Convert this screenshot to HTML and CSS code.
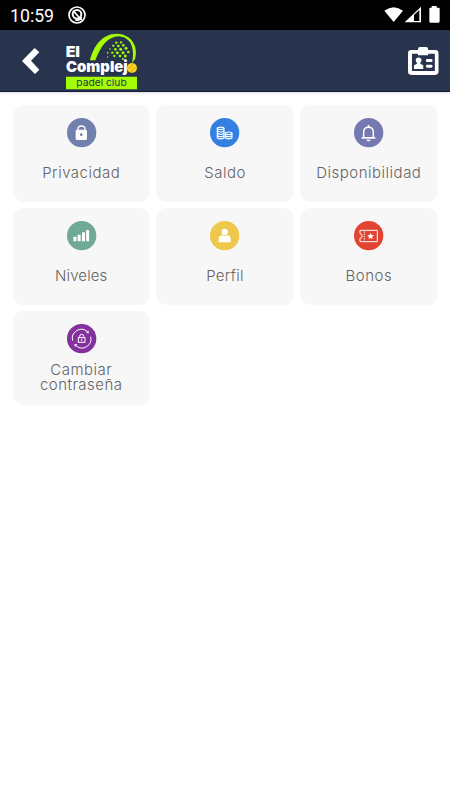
FILE: index.html
```
<!DOCTYPE html>
<html lang="es">
<head>
<meta charset="utf-8">
<title>El Complejo padel club</title>
<link rel="stylesheet" href="styles.css">
</head>
<body>
<div class="status">
  <span class="clock">10:59</span>
  <svg class="notice" viewBox="0 0 54 54" fill="none" stroke="#fff"><circle cx="27" cy="27" r="24" stroke-width="5"/><circle cx="27" cy="25" r="13" stroke-width="6"/><path d="M15 14L41 42" stroke-width="5"/><path d="M22 42Q36 45 41 33" stroke-width="5"/></svg>
  <svg class="signals" viewBox="0 0 168 54"><path d="M1 14Q29-7 57 14L29 48Z" fill="#fff"/><path d="M62 49L111 2V49Z" fill="#fff"/><path d="M90 45V27L106 12V45Z" fill="#000"/><path d="M137 5H143V0H158V5H164Q167 5 167 8V46Q167 50 163 50H139Q136 50 136 46V8Q136 5 139 5Z" fill="#fff"/></svg>
</div>
<header class="bar">
  <svg class="back" viewBox="0 0 54 78"><path d="M38 0L52 13L27 38L52 65L39 78L0 39Z" fill="#fff"/></svg>
  <svg class="logo" viewBox="0 0 216 171">
    <path d="M72 82C83 35 112 2 152 2C194 2 219 39 207 78L198 90C206 57 201 14 159 10C125 11 104 40 88 82Z" fill="#a4fb05"/>
    <g fill="#a4fb05">
      <circle cx="151" cy="29" r="3.500"/><circle cx="165" cy="28" r="3.500"/><circle cx="142" cy="38" r="3.500"/><circle cx="157" cy="39" r="4"/><circle cx="172" cy="37" r="4"/><circle cx="132" cy="48" r="2.500"/><circle cx="148" cy="49" r="4"/><circle cx="164" cy="49" r="4.500"/><circle cx="180" cy="46" r="4.500"/><circle cx="125" cy="59" r="2.500"/><circle cx="139" cy="59" r="3.500"/><circle cx="154" cy="59" r="4.500"/><circle cx="171" cy="59" r="4.500"/><circle cx="187" cy="57" r="4"/><circle cx="125" cy="72" r="2"/><circle cx="145" cy="69" r="3.500"/><circle cx="162" cy="69" r="4"/><circle cx="178" cy="69" r="4.500"/><circle cx="171" cy="78" r="3"/>
    </g>
    <text class="brand" x="-1" y="72" textLength="43" lengthAdjust="spacingAndGlyphs">El</text>
    <text class="brand" x="0" y="116" textLength="185" lengthAdjust="spacingAndGlyphs">Complej</text>
    <circle cx="198" cy="105" r="15" fill="#ffd51c"/>
    <path d="M185 104Q197 108 200 91M196 119Q198 105 212 104" fill="none" stroke="#a8912f" stroke-width="2"/>
    <path d="M0 131H213V169H0Z" fill="#a4fb05"/>
    <text class="club" x="31" y="158" textLength="151" lengthAdjust="spacingAndGlyphs">padel club</text>
  </svg>
  <svg class="badge" viewBox="0 0 92 84"><path d="M10 9H30V7Q30 0 37 0H54Q61 0 61 7V9H82Q92 9 92 19V74Q92 84 82 84H10Q0 84 0 74V19Q0 9 10 9Z" fill="#fff"/><path d="M12 20H30V25H61V20H81V72H12Z" fill="#28334d"/><g fill="#fff"><circle cx="32" cy="40" r="8.500"/><path d="M27 44H37V50L46 55V66H18V55L27 50Z"/><rect x="54" y="36" width="20" height="9" rx="4"/><rect x="54" y="53" width="20" height="9" rx="4"/></g></svg>
</header>
<main class="grid">
  <section class="card">
    <svg class="icon" viewBox="0 0 88 88"><circle cx="44" cy="44" r="44" fill="#7180ad"/><path d="M33 38V33Q33 24 43.500 24Q54 24 54 33V38" fill="none" stroke="#fff" stroke-width="4"/><rect x="26" y="35" width="34" height="31" rx="4" fill="#fff"/><circle cx="43" cy="50" r="4" fill="#7180ad"/></svg>
    <span class="label privacidad">Privacidad</span>
  </section>
  <section class="card">
    <svg class="icon" viewBox="0 0 88 88"><circle cx="44" cy="44" r="44" fill="#347fe2"/><g fill="none" stroke="#fff" stroke-width="3.500"><ellipse cx="32" cy="31" rx="10" ry="3.500"/><path d="M22 31V60Q32 65 42 60V31M22 39Q32 45 42 39M22 46Q32 52 42 46M22 53Q32 59 42 53"/><ellipse cx="56" cy="46" rx="10" ry="4"/><path d="M46 46V61M66 46V61M46 53Q56 60 66 53M46 60Q56 65 66 60"/></g></svg>
    <span class="label saldo">Saldo</span>
  </section>
  <section class="card">
    <svg class="icon" viewBox="0 0 88 88"><circle cx="44" cy="44" r="44" fill="#7579b2"/><path d="M29 59V43Q29 28 43.500 28Q58 28 58 43V59" fill="none" stroke="#fff" stroke-width="4.500"/><path d="M41 21H46V28H41ZM23 57H64V62H23ZM37 65H50Q49 70 43.500 70Q38 70 37 65Z" fill="#fff"/></svg>
    <span class="label disponibilidad">Disponibilidad</span>
  </section>
  <section class="card">
    <svg class="icon" viewBox="0 0 88 88"><circle cx="44" cy="44" r="44" fill="#70a994"/><g fill="#fff"><rect x="19.500" y="47" width="9" height="14" rx="2"/><rect x="32" y="41" width="9" height="20" rx="2"/><rect x="45" y="34" width="9" height="27" rx="2"/><rect x="57.500" y="27" width="9" height="34" rx="2"/></g></svg>
    <span class="label niveles">Niveles</span>
  </section>
  <section class="card">
    <svg class="icon" viewBox="0 0 88 88"><circle cx="44" cy="44" r="44" fill="#edc84a"/><circle cx="44" cy="33" r="9.500" fill="#fff"/><path d="M26 64V55Q26 43 37 43Q44 47 51 43Q62 43 62 55V64Z" fill="#fff"/></svg>
    <span class="label perfil">Perfil</span>
  </section>
  <section class="card">
    <svg class="icon" viewBox="0 0 88 88"><circle cx="44" cy="44" r="44" fill="#e34331"/><path d="M18 28H70V62H18V52Q25 50 25 45Q25 40 18 38Z" fill="none" stroke="#fff" stroke-width="3"/><path d="M31 31V60" stroke="#fff" stroke-width="3" stroke-dasharray="4 3"/><path d="M50 36L53 42L60 43L55 48L56 54L50 51L44 54L45 48L40 43L47 42Z" fill="#fff"/></svg>
    <span class="label bonos">Bonos</span>
  </section>
  <section class="card">
    <svg class="icon" viewBox="0 0 88 88"><circle cx="44" cy="44" r="44" fill="#85309f"/><g fill="none" stroke="#fff" stroke-width="3"><path d="M17 50A27 27 0 0 1 60 22M71 38A27 27 0 0 1 28 66"/><rect x="34" y="41" width="20" height="14"/><path d="M38 41V37Q38 31 44 31Q50 31 50 37V41M44 45V51"/></g><path d="M57 27L66 28L64 19ZM31 61L22 60L24 69Z" fill="#fff"/></svg>
    <span class="label double">Cambiar<br>contraseña</span>
  </section>
</main>
</body>
</html>
```
FILE: styles.css
```
* { box-sizing: border-box; }
body {
  margin: 0;
  min-height: 800px;
  background: #fff;
  font-family: Inter, sans-serif;
}
svg { display: block; flex: none; overflow: visible; }
.status {
  height: 30px;
  display: flex;
  align-items: center;
  padding: 0 10px;
  background: #000;
  color: #fff;
}
.clock { width: 58px; font: 17.7px/30px Roboto, sans-serif; padding-top: 2px; }
.notice { width: 18px; height: 18px; }
.signals { width: 56px; height: 18px; margin-left: auto; }
.bar {
  height: 62px;
  display: flex;
  align-items: flex-start;
  padding: 0 11.5px 0 21.5px;
  background: #28334d;
  border-bottom: 1.5px solid #101c3c;
  box-shadow: 0 1px 3px rgba(0, 0, 0, .15);
}
.back { width: 18px; height: 26px; margin-top: 18px; }
.logo { width: 72px; height: 57px; margin: 2.7px 0 0 26.5px; }
.badge { width: 30.5px; height: 28px; margin: 17px 0 0 auto; }
.brand { font: 900 45px Inter, sans-serif; fill: #fff; }
.club { font: 400 28px Inter, sans-serif; fill: #28334d; }
.grid {
  display: grid;
  grid-template-columns: repeat(3, 137.5px);
  grid-template-rows: 97px 97px 94px;
  gap: 6px 6.3px;
  padding: 13px 12.5px;
}
.card {
  display: flex;
  flex-direction: column;
  align-items: center;
  padding-top: 12.7px;
  border-radius: 11px;
  background: #f7f7f7;
}
.icon { width: 29.3px; height: 29.3px; }
.label {
  margin-top: 16px;
  color: #646464;
  font-size: 15px;
  font-weight: 300;
  line-height: 20px;
  letter-spacing: .5px;
  text-align: center;
  white-space: nowrap;
}
.niveles { letter-spacing: .1px; }
.perfil { letter-spacing: .3px; }
.double { margin-top: 9px; line-height: 15px; }
```
